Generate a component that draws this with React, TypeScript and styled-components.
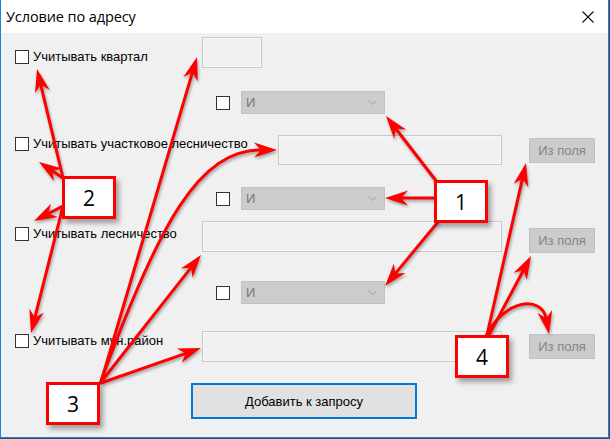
import React from "react";
import styled, { createGlobalStyle } from "styled-components";

const Global = createGlobalStyle`
  html, body { margin: 0; padding: 0; }
  body { background: #3f4a56; width: 610px; height: 439px; overflow: hidden; }
`;

const Frame = styled.div`
  position: relative;
  width: 610px;
  height: 439px;
`;

const Window = styled.div`
  box-sizing: border-box;
  width: 609px;
  height: 438px;
  border-left: 1px solid #1883d7;
  border-right: 1px solid #1883d7;
  border-bottom: 1px solid #1883d7;
  background: #f0f0f0;
  display: flex;
  flex-direction: column;
  font-family: "Liberation Sans", Arial, sans-serif;
`;

const TitleBar = styled.div`
  height: 33px;
  background: #ffffff;
  display: flex;
  align-items: center;
  justify-content: space-between;
  padding: 0 14px 0 5px;
  flex-shrink: 0;
`;

const Title = styled.div`
  font-family: "Open Sans", "Noto Sans", sans-serif;
  font-size: 14.5px;
  color: #000;
  letter-spacing: -0.1px;
`;

const Content = styled.div`
  display: flex;
  flex-direction: column;
`;

const Row = styled.div<{ $mt: number; $h: number }>`
  display: flex;
  align-items: flex-start;
  margin-top: ${(p) => p.$mt}px;
  height: ${(p) => p.$h}px;
`;

const CheckField = styled.label<{ $w: number; $ml: number; $mt: number }>`
  display: flex;
  align-items: center;
  gap: 4px;
  width: ${(p) => p.$w}px;
  margin-left: ${(p) => p.$ml}px;
  margin-top: ${(p) => p.$mt}px;
  flex-shrink: 0;
  font-size: 13px;
  color: #000;
  white-space: nowrap;
`;

const Box = styled.span`
  box-sizing: border-box;
  width: 14px;
  height: 14px;
  border: 1px solid #333333;
  background: #ffffff;
  flex-shrink: 0;
`;

const TextField = styled.div<{ $w: number; $h: number; $mt?: number }>`
  box-sizing: border-box;
  width: ${(p) => p.$w}px;
  height: ${(p) => p.$h}px;
  margin-top: ${(p) => p.$mt ?? 0}px;
  border: 1px solid #c9c9c9;
  background: #f1f1f1;
  box-shadow: inset 0 0 0 1px #f7f7f7;
  flex-shrink: 0;
`;

const Combo = styled.div`
  box-sizing: border-box;
  width: 144px;
  height: 23px;
  margin-left: 11px;
  border: 1px solid #c2c2c2;
  background: #cccccc;
  display: flex;
  align-items: center;
  justify-content: space-between;
  padding: 0 7px 0 4px;
  font-size: 13px;
  color: #787878;
`;

const ComboBox = styled(Box)`
  margin-left: 215px;
  margin-top: 5px;
`;

const FromFieldButton = styled.div<{ $mt: number }>`
  box-sizing: border-box;
  width: 66px;
  height: 25px;
  margin-left: 27px;
  margin-top: ${(p) => p.$mt}px;
  border: 1px solid #c2c2c2;
  background: #cccccc;
  display: flex;
  align-items: center;
  justify-content: center;
  font-size: 13px;
  color: #858585;
`;

const AddButton = styled.div`
  box-sizing: border-box;
  width: 226px;
  height: 36px;
  margin-left: 190px;
  border: 2px solid #0078d7;
  background: #e1e1e1;
  display: flex;
  align-items: center;
  justify-content: center;
  font-size: 13px;
  color: #000;
`;

const Overlay = styled.svg`
  position: absolute;
  left: 0;
  top: 0;
  width: 610px;
  height: 439px;
  pointer-events: none;
  filter: drop-shadow(1px 2px 1.5px rgba(0, 0, 0, 0.35));
`;

const Callout = styled.div<{ $x: number; $y: number }>`
  position: absolute;
  left: ${(p) => p.$x}px;
  top: ${(p) => p.$y}px;
  box-sizing: border-box;
  width: 54px;
  height: 43px;
  border: 3px solid #ff0000;
  background: #ffffff;
  display: flex;
  align-items: center;
  justify-content: center;
  font-family: "Open Sans", "Noto Sans", sans-serif;
  font-size: 21px;
  color: #000;
  box-shadow: 3px 4px 5px rgba(0, 0, 0, 0.35);
`;

const Chevron = () => (
  <svg width="9" height="5" viewBox="0 0 9 5">
    <path d="M0.5 0.5 L4.5 4.5 L8.5 0.5" fill="none" stroke="#9a9a9a" strokeWidth="1" />
  </svg>
);

const CloseIcon = () => (
  <svg width="12" height="12" viewBox="0 0 12 12">
    <path d="M0.5 0.5 L11.5 11.5 M11.5 0.5 L0.5 11.5" stroke="#111" strokeWidth="1.1" />
  </svg>
);

type P = [number, number];

function headPoly(from: P, tip: P, len = 23, w = 7.5): { poly: string; notch: P } {
  const dx = tip[0] - from[0];
  const dy = tip[1] - from[1];
  const d = Math.hypot(dx, dy) || 1;
  const ux = dx / d;
  const uy = dy / d;
  const nx = -uy;
  const ny = ux;
  const bx = tip[0] - ux * len;
  const by = tip[1] - uy * len;
  const notch: P = [tip[0] - ux * len * 0.7, tip[1] - uy * len * 0.7];
  const pts: P[] = [tip, [bx + nx * w, by + ny * w], notch, [bx - nx * w, by - ny * w]];
  return { poly: pts.map((p) => p.join(",")).join(" "), notch };
}

const RED = "#ff0000";

const StraightArrow = ({ from, to }: { from: P; to: P }) => {
  const { poly, notch } = headPoly(from, to);
  return (
    <g>
      <line x1={from[0]} y1={from[1]} x2={notch[0]} y2={notch[1]} stroke={RED} strokeWidth={3} strokeLinecap="round" />
      <polygon points={poly} fill={RED} />
    </g>
  );
};

const CurvedArrow = ({ from, c1, c2, to }: { from: P; c1: P; c2: P; to: P }) => {
  const { poly, notch } = headPoly(c2, to);
  return (
    <g>
      <path
        d={`M${from[0]} ${from[1]} C${c1[0]} ${c1[1]} ${c2[0]} ${c2[1]} ${notch[0]} ${notch[1]}`}
        fill="none"
        stroke={RED}
        strokeWidth={3}
        strokeLinecap="round"
      />
      <polygon points={poly} fill={RED} />
    </g>
  );
};

const straight: { from: P; to: P }[] = [
  // 1
  { from: [437, 182], to: [386, 116] },
  { from: [436, 198], to: [385, 198] },
  { from: [438, 222], to: [385, 286] },
  // 2
  { from: [63, 178], to: [37, 69] },
  { from: [63, 178], to: [39, 162] },
  { from: [63, 206], to: [34, 221] },
  { from: [63, 206], to: [31, 333] },
  // 3
  { from: [101, 382], to: [197, 57] },
  { from: [101, 382], to: [201, 255] },
  { from: [101, 383], to: [201, 348] },
  // 4
  { from: [487, 335], to: [526, 163] },
  { from: [489, 335], to: [531, 256] },
];

export default function App() {
  return (
    <Frame>
      <Global />
      <Window>
        <TitleBar>
          <Title>Условие по адресу</Title>
          <CloseIcon />
        </TitleBar>
        <Content>
          <Row $mt={4} $h={31}>
            <CheckField $w={187} $ml={14} $mt={12}>
              <Box />
              Учитывать квартал
            </CheckField>
            <TextField $w={60} $h={31} />
          </Row>
          <Row $mt={23} $h={23}>
            <ComboBox />
            <Combo>
              И
              <Chevron />
            </Combo>
          </Row>
          <Row $mt={21} $h={30}>
            <CheckField $w={263} $ml={14} $mt={1}>
              <Box />
              Учитывать участковое лесничество
            </CheckField>
            <TextField $w={224} $h={30} />
            <FromFieldButton $mt={3}>Из поля</FromFieldButton>
          </Row>
          <Row $mt={22} $h={23}>
            <ComboBox />
            <Combo>
              И
              <Chevron />
            </Combo>
          </Row>
          <Row $mt={11} $h={32}>
            <CheckField $w={187} $ml={14} $mt={5}>
              <Box />
              Учитывать лесничество
            </CheckField>
            <TextField $w={300} $h={31} />
            <FromFieldButton $mt={7}>Из поля</FromFieldButton>
          </Row>
          <Row $mt={28} $h={23}>
            <ComboBox />
            <Combo>
              И
              <Chevron />
            </Combo>
          </Row>
          <Row $mt={27} $h={31}>
            <CheckField $w={187} $ml={14} $mt={2}>
              <Box />
              Учитывать мун.район
            </CheckField>
            <TextField $w={300} $h={31} />
            <FromFieldButton $mt={3}>Из поля</FromFieldButton>
          </Row>
          <Row $mt={21} $h={36}>
            <AddButton>Добавить к запросу</AddButton>
          </Row>
        </Content>
      </Window>
      <Overlay viewBox="0 0 610 439">
        {straight.map((a, i) => (
          <StraightArrow key={i} from={a.from} to={a.to} />
        ))}
        <CurvedArrow from={[101, 381]} c1={[160, 220]} c2={[200, 150]} to={[277, 150]} />
        <CurvedArrow from={[486, 336]} c1={[505, 298]} c2={[542, 296]} to={[549, 334]} />
      </Overlay>
      <Callout $x={434} $y={180}>1</Callout>
      <Callout $x={62} $y={176}>2</Callout>
      <Callout $x={46} $y={382}>3</Callout>
      <Callout $x={455} $y={335}>4</Callout>
    </Frame>
  );
}
